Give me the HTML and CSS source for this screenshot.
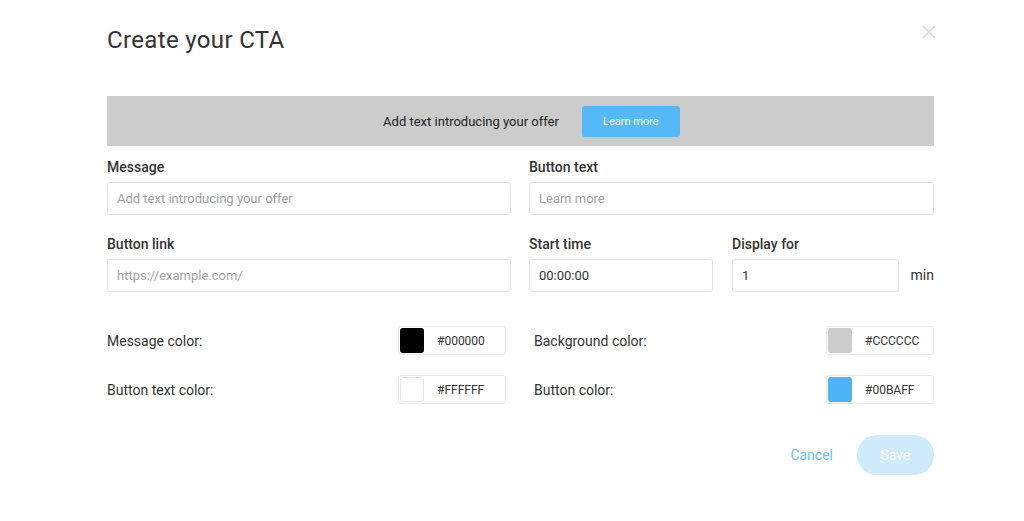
FILE: index.html
```html
<!DOCTYPE html>
<html lang="en">
<head>
    <meta charset="UTF-8">
    <meta name="viewport" content="width=device-width, initial-scale=1.0">
    <title>Create your CTA</title>
    <link rel="stylesheet" href="styles.css">
</head>
<body>
    <div class="modal">
        <div class="modal-head">
            <h1 class="modal-title">Create your CTA</h1>
            <button class="close-btn" type="button" aria-label="Close">
                <svg width="14" height="14" viewBox="0 0 14 14">
                    <path d="M1 1L13 13M13 1L1 13" stroke="#d2d2d2" stroke-width="1.3" fill="none" />
                </svg>
            </button>
        </div>

        <div class="preview">
            <span class="preview-text">Add text introducing your offer</span>
            <span class="preview-btn">Learn more</span>
        </div>

        <div class="fields">
            <div class="field">
                <label class="field-label" for="message">Message</label>
                <input class="field-input" id="message" type="text" placeholder="Add text introducing your offer">
            </div>
            <div class="field">
                <label class="field-label" for="button-text">Button text</label>
                <input class="field-input" id="button-text" type="text" placeholder="Learn more">
            </div>
            <div class="field">
                <label class="field-label" for="button-link">Button link</label>
                <input class="field-input" id="button-link" type="text" placeholder="https://example.com/">
            </div>
            <div class="timing">
                <div class="field field-start">
                    <label class="field-label" for="start-time">Start time</label>
                    <input class="field-input" id="start-time" type="text" value="00:00:00">
                </div>
                <div class="field field-duration">
                    <label class="field-label" for="display-for">Display for</label>
                    <input class="field-input" id="display-for" type="text" value="1">
                </div>
                <span class="unit">min</span>
            </div>
        </div>

        <div class="colors">
            <div class="color-row">
                <span class="color-label">Message color:</span>
                <div class="color-picker">
                    <span class="swatch swatch-black"></span>
                    <span class="color-value">#000000</span>
                </div>
            </div>
            <div class="color-row">
                <span class="color-label">Background color:</span>
                <div class="color-picker">
                    <span class="swatch swatch-grey"></span>
                    <span class="color-value">#CCCCCC</span>
                </div>
            </div>
            <div class="color-row">
                <span class="color-label">Button text color:</span>
                <div class="color-picker">
                    <span class="swatch swatch-white"></span>
                    <span class="color-value">#FFFFFF</span>
                </div>
            </div>
            <div class="color-row">
                <span class="color-label">Button color:</span>
                <div class="color-picker">
                    <span class="swatch swatch-blue"></span>
                    <span class="color-value">#00BAFF</span>
                </div>
            </div>
        </div>

        <div class="actions">
            <button class="cancel-btn" type="button">Cancel</button>
            <button class="save-btn" type="button">Save</button>
        </div>
    </div>
</body>
</html>
```

FILE: styles.css
```css
* {
    padding: 0;
    margin: 0;
    box-sizing: border-box;
}
body {
    background-color: #fff;
    font-family: Roboto, "Liberation Sans", sans-serif;
    color: #333;
}
.modal {
    width: 1024px;
    padding: 26px 90px 0 107px;
}
.modal-head {
    display: flex;
    justify-content: space-between;
    align-items: flex-start;
    height: 28px;
    margin-bottom: 42px;
}
.modal-title {
    font-size: 24px;
    line-height: 28px;
    font-weight: 400;
    color: #333;
    letter-spacing: 0.35px;
}
.close-btn {
    border: none;
    background: none;
    width: 14px;
    height: 14px;
    margin-top: -1px;
    margin-right: -2px;
    display: flex;
}
.preview {
    height: 50px;
    background-color: #ccc;
    display: flex;
    align-items: center;
    justify-content: center;
    gap: 23px;
    padding-left: 22px;
}
.preview-text {
    font-size: 13px;
    color: #222;
}
.preview-btn {
    width: 98px;
    height: 31px;
    border-radius: 3px;
    background-color: #55b8f7;
    color: #fff;
    font-size: 11px;
    display: flex;
    align-items: center;
    justify-content: center;
}
.fields {
    display: grid;
    grid-template-columns: 404px 405px;
    column-gap: 18px;
    row-gap: 21px;
    margin-top: 13px;
}
.field {
    display: flex;
    flex-direction: column;
    gap: 7px;
}
.field-label {
    font-size: 14px;
    line-height: 16px;
    font-weight: 500;
    color: #333;
}
.field-input {
    width: 100%;
    height: 33px;
    border: 1px solid #e2e2e2;
    border-radius: 3px;
    padding: 0 9px;
    font-family: inherit;
    font-size: 13px;
    color: #333;
    outline: none;
}
.field-input::placeholder {
    color: #a2a2a2;
}
.timing {
    display: flex;
    align-items: flex-end;
}
.field-start {
    flex-shrink: 0;
    width: 184px;
    margin-right: 19px;
}
.field-duration {
    flex-shrink: 0;
    width: 167px;
}
.timing .unit {
    margin-left: auto;
    font-size: 14px;
    line-height: 33px;
    color: #333;
}
.colors {
    display: grid;
    grid-template-columns: 399px 400px;
    column-gap: 28px;
    row-gap: 20px;
    margin-top: 34px;
}
.color-row {
    display: flex;
    align-items: center;
    justify-content: space-between;
}
.color-label {
    font-size: 14px;
    color: #333;
}
.color-picker {
    width: 108px;
    height: 29px;
    border: 1px solid #e8e8e8;
    border-radius: 3px;
    display: flex;
    align-items: center;
    padding-left: 1px;
    gap: 13px;
}
.swatch {
    width: 24px;
    height: 25px;
    border-radius: 3px;
}
.swatch-black {
    background-color: #000;
}
.swatch-grey {
    background-color: #ccc;
}
.swatch-white {
    background-color: #fff;
    border: 1px solid #e6e6e6;
}
.swatch-blue {
    background-color: #4db5f7;
}
.color-value {
    font-size: 12px;
    color: #333;
}
.actions {
    display: flex;
    justify-content: flex-end;
    align-items: center;
    gap: 24px;
    margin-top: 31px;
}
.cancel-btn {
    border: none;
    background: none;
    font-family: inherit;
    font-size: 14px;
    color: #6cc2f6;
}
.save-btn {
    width: 77px;
    height: 40px;
    border: none;
    border-radius: 20px;
    background-color: #d0ebfc;
    color: #fff;
    font-family: inherit;
    font-size: 14px;
}
```
